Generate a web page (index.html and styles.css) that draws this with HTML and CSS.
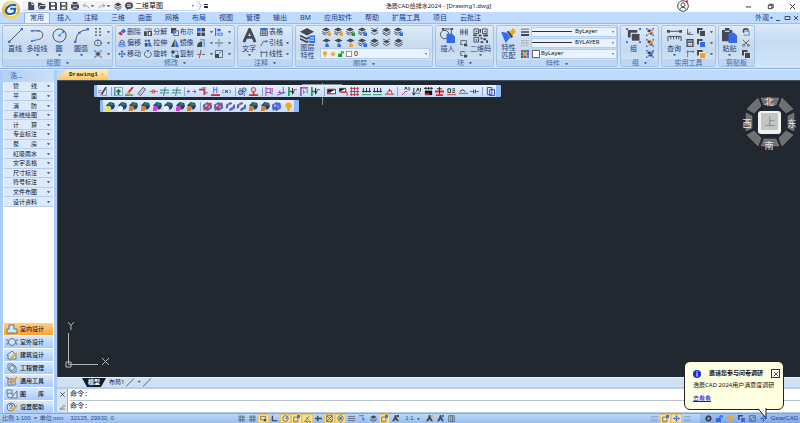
FILE: index.html
```html
<!DOCTYPE html>
<html lang="zh-CN">
<head>
<meta charset="utf-8">
<title>浩辰CAD给排水2024 - [Drawing1.dwg]</title>
<link rel="stylesheet" href="styles.css">
</head>
<body>
<svg class="defs" aria-hidden="true">
  <symbol id="file" viewBox="0 0 10 10"><path class="d" d="M1.500 0h5l2.500 2.500V10H1.500z"/><path class="ws" d="M6 0v3h3"/></symbol>
  <symbol id="open" viewBox="0 0 10 10"><path class="d" d="M0 1h4l1 1.500h4V4H2.500L0 8zM3 5h7L8 9H.5z"/></symbol>
  <symbol id="save" viewBox="0 0 10 10"><path class="d" d="M0 0h8.500L10 1.500V10H0z"/><path class="w" d="M2.500 1h5v3h-5zM2.500 6h5v3h-5z"/></symbol>
  <symbol id="saveas" viewBox="0 0 10 10"><path class="d" d="M0 0h9v10H0z"/><path class="w" d="M2 1h5v3H2zM2 6h5v3H2z"/><path class="os" d="M4 9l6-6"/></symbol>
  <symbol id="print" viewBox="0 0 10 10"><path class="d" d="M2 0h6v2.500H2zM0 3h10v5H0z"/><path class="w" d="M2.500 6h5v1h-5z"/><path class="d" d="M2 8h6v2H2z"/></symbol>
  <symbol id="undo" viewBox="0 0 10 10"><path class="gs" d="M9 8C8 5 5 4 2 4.500M4 2L1.500 4.500 4 7"/></symbol>
  <symbol id="redo" viewBox="0 0 10 10"><path class="gs" d="M1 8c1-3 4-4 7-3.500M6 2l2.500 2.500L6 7"/></symbol>
  <symbol id="chat" viewBox="0 0 10 10"><ellipse class="d" cx="5" cy="4.500" rx="5" ry="4.200"/><path class="d" d="M2 7v3l3-2"/><path class="ws" d="M2.500 3.500h5M2.500 5.500h5"/></symbol>
  <symbol id="layers" viewBox="0 0 10 10"><path class="d" d="M5 .5L9.500 3 5 5.500.5 3z"/><path class="ds" d="M.5 5L5 7.500 9.500 5M.5 7L5 9.500 9.500 7"/></symbol>
  <symbol id="lay" viewBox="0 0 10 10"><path class="d" d="M4.500 .5L9 2.700 4.500 5 0 2.700z"/><path class="ds" d="M.3 5l4 2 4-2M.3 7l4 2"/><path class="c" d="M6 6h4v4H6z"/></symbol>
  <symbol id="lay2" viewBox="0 0 10 10"><path class="d" d="M5 .5L9.500 2.700 5 5 .5 2.700z"/><path class="c" d="M3.500 10l.5-3 1.500-1.500L7 7l1 3z"/></symbol>
  <symbol id="layb" viewBox="0 0 10 10"><path class="bs" d="M1 1l4 2 4-2"/><path class="d" d="M1 4l4-1.500L9 4 5 6z"/><path class="ds" d="M1 6l4 2.500L9 6"/></symbol>
  <symbol id="laybig" viewBox="0 0 16 16"><path class="d" d="M7.500 0L15 4 7.500 8 0 4z"/><path class="ds2" d="M0 8l7 3.500L10 10M0 11.500L7 15l2-1"/><path class="b" d="M10 8h6v8h-6z"/><path class="ws" d="M11 10.500h4M11 13h4"/></symbol>
  <symbol id="line" viewBox="0 0 16 16"><path class="ds" d="M2 14L14 2"/><path class="b" d="M0 13.500h2.500V16H0zM13.500 0H16v2.500h-2.500z"/></symbol>
  <symbol id="pline" viewBox="0 0 16 16"><path class="ds" d="M2 3h7c6 0 6 8 1 9"/><path class="b" d="M1 2h2v2H1zM8 2h2v2H8zM1 13h2v2H1z"/><path class="bs" d="M2 14l8-2"/></symbol>
  <symbol id="circle" viewBox="0 0 16 16"><circle class="ds" cx="8" cy="8" r="7"/><path class="bs" d="M8 8l4-4"/><path class="b" d="M7 7h2v2H7zM11 3h2v2h-2z"/></symbol>
  <symbol id="arc" viewBox="0 0 16 16"><path class="ds" d="M2 14C2 7 7 2 14 2"/><path class="b" d="M0 13.500h2.500V16H0zM4.500 4H7v2.500H4.500zM13.500 0H16v2.500h-2.500z"/></symbol>
  <symbol id="pts" viewBox="0 0 10 10"><path class="d" d="M1.500 0h2v2h-2zM6.500 0h2v2h-2zM1.500 4h2v2h-2zM6.500 4h2v2h-2zM1.500 8h2v2h-2zM6.500 8h2v2h-2z"/></symbol>
  <symbol id="ell" viewBox="0 0 10 10"><ellipse class="ds" cx="5" cy="5" rx="4.500" ry="3.500"/><path class="b" d="M4 .5h2v2H4zM8 4h2v2H8zM4 4.500h1.500V6H4z"/></symbol>
  <symbol id="hatch" viewBox="0 0 10 10"><path class="g" d="M1.500 1.500h7v7h-7z"/><path class="bs" d="M0 1.500h2M1.500 0v2M8.500 0v1.500H10M0 8.500h2V10M10 8.500H8.500V10"/><path class="d" d="M3 3h4v4H3z"/></symbol>
  <symbol id="erase" viewBox="0 0 10 10"><path class="b" d="M3.500 4L7 .5 10 4 6.500 7z"/><path class="r" d="M3 4.500L6 7.500 4 9.500 0 7z"/></symbol>
  <symbol id="offset" viewBox="0 0 10 10"><path class="bs" d="M1 9h8V7H1z"/><path class="ds" d="M1 5h2V3c0-2 4-2 4 0v2h2M3 5h4"/></symbol>
  <symbol id="move" viewBox="0 0 10 10"><path class="b" d="M5 0l2 2.500H5.600v1.900h1.900V3L10 5 7.500 7V5.600H5.600v1.900H7L5 10 3 7.500h1.400V5.600H2.500V7L0 5l2.500-2v1.400h1.900V2.500H3z"/></symbol>
  <symbol id="explode" viewBox="0 0 10 10"><path class="g" d="M1 0h9v2.500H1z"/><path class="d" d="M0 4h3.500v6H0zM4.500 3.500H10V10H4.500z"/><path class="w" d="M6 5h2v4H6z"/></symbol>
  <symbol id="stretch" viewBox="0 0 10 10"><path class="b" d="M1 1h2.500v2.500H1zM5.500 4h2L10 9.500H5.500z"/><path class="d" d="M1 5h3.500v4.500H1zM4.500 1h3v2h-3z"/></symbol>
  <symbol id="rotate" viewBox="0 0 10 10"><path class="ds" d="M3 1.500a4.200 4.200 0 1 0 5 1"/><path class="b" d="M3 0h4L5 3z"/></symbol>
  <symbol id="bool" viewBox="0 0 10 10"><path class="d" d="M0 0h6.500v6.500H0z"/><path class="w" d="M3 3h4v4H3z"/><path class="ds" d="M3.500 3.500h6v6h-6z"/><path class="b" d="M4 4h2.500v2.500H4z"/></symbol>
  <symbol id="mirror" viewBox="0 0 10 10"><path class="d" d="M4.500 0v10H0z"/><path class="b" d="M5.500 0v10H10z"/></symbol>
  <symbol id="copy" viewBox="0 0 10 10"><circle class="d" cx="2.500" cy="2.500" r="2.300"/><path class="bs" d="M5 1.500h3.500V5M1.500 5.500v3h3"/><path class="d" d="M5.500 6H10v4H5.500z"/></symbol>
  <symbol id="array" viewBox="0 0 10 10"><path class="d" d="M0 5.500h4.500V10H0zM5.500 5.500H10V10H5.500zM5.500 0H10v4.500H5.500z"/><path class="b" d="M0 0h4.500v4.500H0z"/></symbol>
  <symbol id="fillet" viewBox="0 0 10 10"><path class="d" d="M0 10C0 5 3 3 6.500 3v7z"/><path class="bs" d="M4 1h5v9"/></symbol>
  <symbol id="trim" viewBox="0 0 10 10"><path class="ds" d="M5 0L3 10M6 5.500h4"/><path class="rs" d="M0 5.500h5"/></symbol>
  <symbol id="align" viewBox="0 0 10 10"><path class="b" d="M0 0h1.500v10H0zM3 1h4v3H3z"/><path class="bs" d="M3.500 6.500h6v2.500h-6z"/></symbol>
  <symbol id="brk" viewBox="0 0 10 10"><path class="bs" d="M5 0v3.500M5 6.500V10"/><path class="ds" d="M0 5h10"/></symbol>
  <symbol id="scale" viewBox="0 0 10 10"><path class="ds" d="M.5.5h9v9h-9z"/><path class="d" d="M0 5h5v5H0z"/><path class="bs" d="M5 4.500l3-2.500"/></symbol>
  <symbol id="txt" viewBox="0 0 16 16"><path class="ds3" d="M2 15L8 1.500 14 15M4.500 10h7"/></symbol>
  <symbol id="table" viewBox="0 0 10 10"><path class="b" d="M.5 0h9v2.500h-9z"/><path class="ds" d="M.5 3.500h9v6h-9zM1 6.500h8M3.500 3.500v6M6.500 3.500v6"/></symbol>
  <symbol id="lead" viewBox="0 0 10 10"><path class="ds" d="M1 9l3-6h3"/><circle class="b" cx="8" cy="3" r="1.500"/></symbol>
  <symbol id="dim" viewBox="0 0 10 10"><path class="ds" d="M1.500 1v8M8.500 1v8M1 3h8"/></symbol>
  <symbol id="insert" viewBox="0 0 16 16"><circle class="ds" cx="5" cy="7" r="4.500"/><path class="ds" d="M3 1h9v6"/><path class="b" d="M7 6h6l3 3v7H7z"/><path class="d" d="M2 0h2v2H2zM12 0h2v2h-2z"/></symbol>
  <symbol id="qr" viewBox="0 0 16 16"><path class="ds" d="M1 1h5v5H1zM10 1h5v5h-5zM1 10h5v5H1z"/><path class="d" d="M3 3h1.500v1.500H3zM12 3h1.500v1.500H12zM3 12h1.500v1.500H3zM7 1h1.500v4H7zM0 7h4v1.500H0zM6 7h3v2H6zM11 7h5v2h-5zM8 10h2v2H8zM11 11h3v2h-3zM8 14h3v2H8zM14 13h2v3h-2z"/></symbol>
  <symbol id="blk1" viewBox="0 0 10 10"><path class="ds" d="M1 1v8M3.500 1v8M7 1v8M9 1v8M1 5h8"/><circle class="b" cx="2" cy="5" r="1"/></symbol>
  <symbol id="blk2" viewBox="0 0 10 10"><path class="ds" d="M1 7V2h7v3M1 7h3"/><path class="d" d="M5 5.500h4V9H5z"/></symbol>
  <symbol id="blk3" viewBox="0 0 10 10"><path class="ds" d="M1 7V2h5M1 7h3"/><path class="d" d="M5 6h4v3.500H5z"/><path class="os" d="M5 5l4-4"/></symbol>
  <symbol id="match" viewBox="0 0 16 16"><path class="o" d="M9 4l4-4 3 4-4 4z"/><path class="b" d="M0 4l6 1 4 5-5 6z"/><path class="d" d="M8 3l5 6-2 2-5-7z"/></symbol>
  <symbol id="lw" viewBox="0 0 10 10"><path class="d" d="M0 1h10v1H0zM0 4h10v2H0zM0 7.500h10V10H0z"/></symbol>
  <symbol id="lt" viewBox="0 0 10 10"><path class="gs" d="M0 2h10" stroke-dasharray="2 1"/><path class="gs" d="M0 5h10" stroke-dasharray="4 1"/><path class="gs" d="M0 8h10" stroke-dasharray="1 1"/></symbol>
  <symbol id="pal" viewBox="0 0 10 10"><path fill="#e8322c" d="M0 0h3v3H0zM3.500 7H6.500v3H3.500z"/><path fill="#1f9a3a" d="M3.500 0h3v3h-3zM0 3.500h3v3H0z"/><path fill="#2d58e8" d="M7 0h3v3H7zM0 7h3v3H0z"/><path fill="#e8b020" d="M3.500 3.500h3v3h-3z"/><path fill="#b03ad0" d="M7 3.500h3v3H7z"/><path fill="#20a0d0" d="M7 7h3v3H7z"/></symbol>
  <symbol id="group" viewBox="0 0 16 16"><path class="d" d="M2 2h10v8H2z"/><path class="w" d="M5 5h10v9H5z"/><path class="d" d="M6 6h8.500v7.500H6z"/><path class="b" d="M0 0h2v2H0zM14 0h2v2h-2zM0 14h2v2H0zM14 14h2v2h-2z"/></symbol>
  <symbol id="grp" viewBox="0 0 10 10"><path class="d" d="M2 2h4v3H2zM5 5h3v3H5z"/><path class="b" d="M0 0h2v2H0zM8 0h2v2H8zM0 8h2v2H0zM8 8h2v2H8z"/><path class="cs" d="M3 8l6-6"/></symbol>
  <symbol id="query" viewBox="0 0 16 16"><path class="ds" d="M2 3.500h12M1 14V9h14v5M4 9v3M7 9v3M10 9v3M12.500 9v3"/><path class="d" d="M0 2h3v3H0zM13 2h3v3h-3z"/></symbol>
  <symbol id="ucs" viewBox="0 0 10 10"><path class="ds" d="M2 1v7h7M2 8l4-3"/></symbol>
  <symbol id="calc" viewBox="0 0 10 10"><path class="d" d="M.5 0h9v10h-9z"/><path class="ws" d="M2 2.500h6M2 5.500h6M2 7.500h6M4 5v4M6.500 5v4"/></symbol>
  <symbol id="cor" viewBox="0 0 10 10"><path class="bs" d="M2 9V2h7"/><path class="b" d="M1 1h2v2H1zM8 1h2v2H8z"/></symbol>
  <symbol id="two" viewBox="0 0 10 10"><path class="d" d="M0 0h7v7H0z"/><path class="w" d="M2.500 2.500H10V10H2.500z"/><path class="c" d="M3.500 3.500H10V10H3.500z"/></symbol>
  <symbol id="paste" viewBox="0 0 16 16"><path class="d" d="M0 2h3V0h5v2h3v12H0z"/><path class="w" d="M3 3h5v1H3z"/><path class="b" d="M7 5h6l3 3v8H7z"/></symbol>
  <symbol id="clip" viewBox="0 0 10 10"><path class="ds2" d="M2 6V3c0-2.500 5.500-2.500 5.500 0"/><path class="bs" d="M4 4h5v5H2"/></symbol>
  <symbol id="cut" viewBox="0 0 10 10"><path class="ds" d="M1 1l6 6M9 1L3 7"/><circle class="ds" cx="2" cy="8" r="1.300"/><circle class="ds" cx="8" cy="8" r="1.300"/></symbol>
  <symbol id="bulb" viewBox="0 0 10 10"><circle class="o" cx="5" cy="4" r="3.500"/><path class="o" d="M3.700 7h2.600v3H3.700z"/></symbol>
  <symbol id="sun" viewBox="0 0 10 10"><circle class="o" cx="5" cy="5" r="2.500"/><path class="os" d="M5 0v10M0 5h10M1.500 1.500l7 7M8.500 1.500l-7 7"/></symbol>
  <symbol id="lock" viewBox="0 0 10 10"><path class="c" d="M0 4.500h7V10H0z"/><path class="cs" d="M5.500 5V2.500C5.500.5 9 .5 9 2.500V4"/></symbol>
  <symbol id="sq" viewBox="0 0 10 10"><path fill="#fff" stroke="#333" d="M.5.5h9v9h-9z"/></symbol>
  <symbol id="user" viewBox="0 0 12 12"><circle class="ds" cx="6" cy="6" r="5.300"/><circle class="ds" cx="6" cy="4.800" r="2"/><path class="ds" d="M2.500 10c1-3.500 6-3.500 7 0"/><circle class="r" cx="10" cy="1.500" r="1.300"/></symbol>

  <symbol id="t-pen" viewBox="0 0 10 10"><path class="gs" d="M0 4h4M0 6h3M9.500 2v7.500H4"/><path class="ds2" d="M4 8l5-8"/><path class="rs" d="M2 9l2-1"/></symbol>
  <symbol id="t-tree" viewBox="0 0 10 10"><path fill="#dfe8f4" stroke="#7f9cc8" d="M.5.5h9v9h-9z"/><path fill="#0a8a30" d="M5 2l3 3-2 1v3H4V6L2 5z"/><path class="bs" d="M1 0v10"/></symbol>
  <symbol id="t-brush" viewBox="0 0 10 10"><path fill="none" stroke="#2a9a40" stroke-width="1.500" d="M0 9h9"/><path class="rs2" d="M4 6l5-6"/><path class="os2" d="M2 6l3 2"/></symbol>
  <symbol id="t-rub" viewBox="0 0 10 10"><path fill="#c8ccd8" stroke="#556" d="M1 7.500L6.500.5l3 2L4 9.500z"/></symbol>
  <symbol id="t-node" viewBox="0 0 10 10"><path class="gs" d="M0 5h10"/><circle fill="none" stroke="#d42020" cx="5" cy="5" r="1.800"/></symbol>
  <symbol id="t-cross" viewBox="0 0 10 10"><path fill="none" stroke="#2a7a6a" d="M0 3.500h10M0 6.500h4M6 6.500h4M4 10l2-10"/></symbol>
  <symbol id="t-dbl" viewBox="0 0 10 10"><path fill="none" stroke="#a030c0" d="M0 5h10M2 3L0 5l2 2M8 3l2 2-2 2"/><path class="w" d="M4 4h2v2H4z"/></symbol>
  <symbol id="t-tap" viewBox="0 0 10 10"><path class="rs2" d="M0 3h6v6"/><path class="bs" d="M3 1h5M6 6.500h4"/></symbol>
  <symbol id="t-mag" viewBox="0 0 10 10"><path fill="none" stroke="#a020c0" stroke-width="1.500" d="M1 0v10M1 1h8"/><path fill="none" stroke="#1a9a60" d="M4 3v4l2-2M8 2v5"/></symbol>
  <symbol id="t-riser" viewBox="0 0 10 10"><path class="bs" d="M3 0v7M6.500 0v7M3 3h3.500"/><path class="rs2" d="M0 9h10"/></symbol>
  <symbol id="t-valve" viewBox="0 0 10 10"><path fill="none" stroke="#1d7a4a" d="M2 3L0 5l2 2M8 3l2 2-2 2M4 3.500v3l2-3v3z"/></symbol>
  <symbol id="t-pump" viewBox="0 0 10 10"><circle fill="#9aa6c8" stroke="#334a80" cx="3" cy="6" r="2.500"/><circle fill="#c2cade" stroke="#334a80" cx="7" cy="3" r="2"/><path class="bs" d="M1 2h3M7 6v4"/></symbol>
  <symbol id="t-stamp" viewBox="0 0 10 10"><circle fill="#e0c4cc" stroke="#a34a5a" cx="5" cy="3" r="2.500"/><path class="rs2" d="M5 5v3M0 9h10"/></symbol>
  <symbol id="t-pipe" viewBox="0 0 10 10"><path fill="none" stroke="#a030c0" d="M1 0v10M1 2h6M1 6h3"/><path class="bs" d="M6 2v5l3 1"/><path class="rs" d="M8 1v5M4 6h3"/></symbol>
  <symbol id="t-turn" viewBox="0 0 10 10"><path class="bs" d="M0 9l9-3M7 0v7M4 7l5-1"/><path class="rs" d="M1 6h4M3 4v3"/></symbol>
  <symbol id="t-green" viewBox="0 0 10 10"><path fill="none" stroke="#128a30" stroke-width="1.600" d="M1 0v10M1 5h5"/><path class="ks" d="M5 1v7l2-4"/><path class="rs" d="M6 3h4"/></symbol>
  <symbol id="t-box" viewBox="0 0 10 10"><path fill="#fff" stroke="#333" d="M.5 2.500h9v5h-9z"/><path class="k" d="M1 3h8L1 7z"/><path class="r" d="M1 5h3v2H1z"/></symbol>
  <symbol id="t-boxr" viewBox="0 0 10 10"><path fill="#fff" stroke="#333" d="M.5 1.500h7v4h-7z"/><path class="k" d="M1 2h6L1 5z"/><path class="rs" d="M2 6h7v4"/></symbol>
  <symbol id="t-grid" viewBox="0 0 10 10"><path fill="none" stroke="#d42020" d="M0 1.500h10M0 5h10M0 8.500h10"/><path fill="none" stroke="#7a4a5a" d="M1.500 0v10M5 0v10M8.500 0v10"/></symbol>
  <symbol id="t-comb" viewBox="0 0 10 10"><path class="ks" d="M0 5h10M1.500 1v5M5 1v5M8.500 1v5"/><path fill="none" stroke="#1a9a40" d="M0 8.500h10"/></symbol>
  <symbol id="t-red" viewBox="0 0 10 10"><path class="rs" d="M0 8h10M2 8l2-4h3l1 4"/><path class="ds" d="M5 2v3"/></symbol>
  <symbol id="t-a1" viewBox="0 0 10 10"><path class="rs" d="M1 9l4-4h2"/><path class="ks" d="M4 3l1.500-3L7 3M9 0v4"/></symbol>
  <symbol id="t-a2" viewBox="0 0 10 10"><path class="ks" d="M2 1v8M0 6l2 3 2-3M5 5l1.500-4L8 5M9.500 1v4"/><path class="rs" d="M5 7h4"/></symbol>
  <symbol id="t-slab" viewBox="0 0 10 10"><path class="ks" d="M0 1.500h10M2 0v3M5 0v3M8 0v3"/><path class="k" d="M1 4h8v5H1z"/><path class="r" d="M1 7h5v2H1z"/></symbol>
  <symbol id="t-stack" viewBox="0 0 10 10"><path class="rs2" d="M0 5h10M1 9h8"/><path class="ks" d="M2 2h6M5 0v8"/></symbol>
  <symbol id="t-num" viewBox="0 0 10 10"><path class="ks" d="M1 2h3v4H1zM6 2h3M6 4h3M6 6h3"/><path class="rs" d="M0 8.500h10"/></symbol>
  <symbol id="t-wave" viewBox="0 0 10 10"><path class="ks" d="M1 5l3-2 3 2"/><path class="rs" d="M0 7h10"/></symbol>
  <symbol id="t-dot" viewBox="0 0 10 10"><path class="rs" d="M0 5h3M7 5h3"/><path class="ks" d="M4 3v4M6 3v4"/></symbol>
  <symbol id="t-clip" viewBox="0 0 10 10"><path fill="#dfe8ff" stroke="#2c3fa8" d="M1.500.5h5v8h-5zM4 3h5.500v6.500H4z"/></symbol>
  <symbol id="t-cube" viewBox="0 0 10 10"><path fill="#223c90" d="M0 4l4-4 5 1 1 4-5 3z"/><path fill="#1d8a35" d="M3 1h4l2 3H4z"/><path class="c" d="M0 6l3-2 3 2-2 4H0z"/><path fill="#334" d="M6 6l3-2v3L6 9z"/></symbol>
  <symbol id="t-lamp" viewBox="0 0 10 10"><path fill="#5a64b8" d="M0 3l5-3 5 3v4l-5 3-5-3z"/><path fill="#c4cef4" d="M2.500 3h5v3h-5z"/><path class="cs" d="M1 9l8-8"/></symbol>

  <symbol id="s-grid" viewBox="0 0 10 10"><path class="ds" d="M3 0v10M7 0v10M0 3h10M0 7h10"/></symbol>
  <symbol id="s-l" viewBox="0 0 10 10"><path class="ds2" d="M2 1v7h7"/></symbol>
  <symbol id="s-pol" viewBox="0 0 10 10"><circle class="ds" cx="5" cy="5" r="4"/><path class="bs" d="M5 5l4-4M5 5h4"/></symbol>
  <symbol id="s-snap" viewBox="0 0 10 10"><path class="ds" d="M1 3h6v6H1z"/><path class="b" d="M6 0h4v4H6z"/></symbol>
  <symbol id="s-ang" viewBox="0 0 10 10"><path class="ds" d="M1 9l7-8M1 9h9M3 3l4 4"/></symbol>
  <symbol id="s-plus" viewBox="0 0 10 10"><path class="ds2" d="M4 1v8M0 5h10"/></symbol>
  <symbol id="s-x" viewBox="0 0 10 10"><path class="ds" d="M1 1h8v8H1zM1 1l8 8M9 1L1 9"/></symbol>
  <symbol id="s-tgt" viewBox="0 0 10 10"><circle class="ds" cx="5" cy="5" r="4"/><circle class="b" cx="5" cy="5" r="2"/></symbol>
  <symbol id="s-bars" viewBox="0 0 10 10"><path class="ds" d="M0 2h10M0 5h10M0 8h10"/></symbol>
  <symbol id="s-lines" viewBox="0 0 10 10"><path class="gs" d="M0 2.500h10M0 7.500h10"/></symbol>
  <symbol id="s-cur" viewBox="0 0 10 10"><path class="ds" d="M0 1h7"/><path class="b" d="M4 2l5 5H6v3z"/></symbol>
  <symbol id="s-man" viewBox="0 0 10 10"><path class="d" d="M4 0h2l1 4 3 5H7L5 6 3 9H0l3-5z"/><path class="c" d="M7 0h3v3H7z"/></symbol>
  <symbol id="s-col" viewBox="0 0 10 10"><path class="ds" d="M1 1h8v9H1zM4 1v9M6.500 1v9"/></symbol>
  <symbol id="s-gear" viewBox="0 0 10 10"><circle fill="none" stroke="#3a4250" stroke-width="2.400" cx="5" cy="5" r="3"/><path class="ds" d="M5 0v2M5 8v2M0 5h2M8 5h2M1.500 1.500l1.500 1.500M7 7l1.500 1.500M8.500 1.500L7 3M3 7L1.500 8.500"/></symbol>
  <symbol id="s-max" viewBox="0 0 10 10"><path class="ds" d="M1 1h8v8H1zM5 3h2v2M3 5v2h2"/></symbol>

  <symbol id="m-in" viewBox="0 0 12 10"><path class="m" d="M1 9V5h2V1h5v4h3v4z"/></symbol>
  <symbol id="m-out" viewBox="0 0 12 10"><circle class="m" cx="6" cy="5" r="3.500"/><path class="m" d="M0 3h2v4H0M12 3h-2v4h2"/></symbol>
  <symbol id="m-arch" viewBox="0 0 12 10"><path class="m" d="M1 5l5-4 4 4v4H2V5z"/><path class="os2" d="M5 8l6-5"/></symbol>
  <symbol id="m-proj" viewBox="0 0 12 10"><path class="m" d="M2 1h5l3 3v5H5L2 6z"/><circle class="m" cx="6" cy="5" r="2.500"/></symbol>
  <symbol id="m-tool" viewBox="0 0 12 10"><path class="m" d="M2 3h7v6H2zM4 5h3v2H4z"/><path class="os2" d="M5 7l6-6"/><path class="rs" d="M0 1l3 2"/></symbol>
  <symbol id="m-lib" viewBox="0 0 12 10"><path class="m" d="M1 1h5v4H1zM5 9l6-7v7z"/><circle class="m" cx="4" cy="6.500" r="2.500"/></symbol>
  <symbol id="m-help" viewBox="0 0 12 10"><circle class="m" cx="5" cy="5" r="4"/><path class="ds" d="M3.500 4c0-2 3-2 3 0L5 5.500V7"/><path class="os2" d="M6 9l5-6"/></symbol>
</svg>

<div class="app">
  <header class="titlebar">
    <div class="quick">
      <button aria-label="新建"><svg><use href="#file"/></svg></button>
      <button aria-label="打开"><svg><use href="#open"/></svg></button>
      <button aria-label="保存"><svg><use href="#save"/></svg></button>
      <button aria-label="另存为"><svg><use href="#saveas"/></svg></button>
      <button aria-label="打印"><svg><use href="#print"/></svg></button>
      <button aria-label="放弃" class="more"><svg><use href="#undo"/></svg><i class="arr"></i></button>
      <button aria-label="重做" class="more"><svg><use href="#redo"/></svg><i class="arr"></i></button>
      <button aria-label="图层"><svg><use href="#layers"/></svg></button>
      <button aria-label="反馈"><svg><use href="#chat"/></svg></button>
      <span class="pick"><select aria-label="工作空间"><option>二维草图</option></select></span>
    </div>
    <button class="qmore" aria-label="自定义快速访问"></button>
    <h1>浩辰CAD给排水2024 - [Drawing1.dwg]</h1>
    <div class="wintools">
      <button aria-label="用户" class="user"><svg viewBox="0 0 12 12"><use href="#user"/></svg></button>
      <button aria-label="最小化"><svg viewBox="0 0 8 8"><path class="ks" d="M1 4.500h6"/></svg></button>
      <button aria-label="还原"><svg viewBox="0 0 8 8"><path class="ks" d="M1.500 2.500h4v4h-4zM3 2.500v-1h4v4H5.500"/></svg></button>
      <button aria-label="关闭"><svg viewBox="0 0 8 8"><path class="ks" d="M1 1l6 6M7 1L1 7"/></svg></button>
    </div>
  </header>
  <button class="logo" aria-label="应用程序菜单"><svg viewBox="0 0 24 24">
    <defs><linearGradient id="lg" x1="0" y1="0" x2="0" y2="1"><stop offset="0" stop-color="#f9e58a"/><stop offset=".5" stop-color="#efb820"/><stop offset="1" stop-color="#f7dc50"/></linearGradient></defs>
    <circle cx="12" cy="12" r="11.500" fill="#c6d3e6"/><circle cx="12" cy="12" r="10.500" fill="url(#lg)"/><circle cx="12" cy="12" r="7.500" fill="#fffbe8"/>
    <path d="M18 6.500c-6-1.500-11 1-12 5.500-.6 4 3 5.500 7 4.500l3-1 1-5h-6" fill="none" stroke="#1b5fb4" stroke-width="2.600"/></svg></button>
  <nav class="tabs">
    <a class="on" href="#">常用</a><a href="#">插入</a><a href="#">注释</a><a href="#">三维</a><a href="#">曲面</a><a href="#">网格</a><a href="#">布局</a><a href="#">视图</a><a href="#">管理</a><a href="#">输出</a><a href="#">BM</a><a href="#">应用软件</a><a href="#">帮助</a><a href="#">扩展工具</a><a href="#">项目</a><a href="#">云批注</a>
    <div class="docwin">
      <button class="look">外观<i class="arr"></i></button>
      <button aria-label="最小化图纸"><svg viewBox="0 0 8 8"><path class="ds" d="M2 6.500h4"/></svg></button>
      <button aria-label="还原图纸"><svg viewBox="0 0 8 8"><path class="ds" d="M2 2.500h5v3H2z"/></svg></button>
      <button aria-label="关闭图纸"><svg viewBox="0 0 8 8"><path class="ds" d="M2 2l4 4M6 2L2 6"/></svg></button>
    </div>
  </nav>

  <div class="ribbon">
    <section class="panel p-draw">
      <div class="body">
        <button class="big"><svg><use href="#line"/></svg>直线</button>
        <button class="big"><svg><use href="#pline"/></svg>多段线<i class="arr"></i></button>
        <button class="big"><svg><use href="#circle"/></svg>圆<i class="arr"></i></button>
        <button class="big"><svg><use href="#arc"/></svg>圆弧<i class="arr"></i></button>
        <div class="stack">
          <button class="sm" aria-label="点"><svg><use href="#pts"/></svg><i class="arr"></i></button>
          <button class="sm" aria-label="椭圆"><svg><use href="#ell"/></svg><i class="arr"></i></button>
          <button class="sm" aria-label="填充"><svg><use href="#hatch"/></svg><i class="arr"></i></button>
        </div>
      </div>
      <h2>绘图<i class="arr"></i></h2>
    </section>
    <section class="panel p-mod">
      <div class="body">
        <div class="stack wide">
          <button class="sm"><svg><use href="#erase"/></svg>删除</button>
          <button class="sm"><svg><use href="#offset"/></svg>偏移</button>
          <button class="sm"><svg><use href="#move"/></svg>移动</button>
        </div>
        <div class="stack wide">
          <button class="sm"><svg><use href="#explode"/></svg>分解</button>
          <button class="sm"><svg><use href="#stretch"/></svg>拉伸</button>
          <button class="sm"><svg><use href="#rotate"/></svg>旋转</button>
        </div>
        <div class="stack wide">
          <button class="sm"><svg><use href="#bool"/></svg>布尔</button>
          <button class="sm"><svg><use href="#mirror"/></svg>镜像</button>
          <button class="sm"><svg><use href="#copy"/></svg>复制</button>
        </div>
        <div class="stack">
          <button class="sm" aria-label="阵列"><svg><use href="#array"/></svg><i class="arr"></i></button>
          <button class="sm" aria-label="圆角"><svg><use href="#fillet"/></svg><i class="arr"></i></button>
          <button class="sm" aria-label="修剪"><svg><use href="#trim"/></svg><i class="arr"></i></button>
        </div>
        <div class="stack">
          <button class="sm" aria-label="对齐"><svg><use href="#align"/></svg><i class="arr"></i></button>
          <button class="sm" aria-label="打断"><svg><use href="#brk"/></svg><i class="arr"></i></button>
          <button class="sm" aria-label="缩放"><svg><use href="#scale"/></svg><i class="arr"></i></button>
        </div>
      </div>
      <h2>修改<i class="arr"></i></h2>
    </section>
    <section class="panel p-ann">
      <div class="body">
        <button class="big"><svg><use href="#txt"/></svg>文字<i class="arr"></i></button>
        <div class="stack">
          <button class="sm"><svg><use href="#table"/></svg>表格</button>
          <button class="sm"><svg><use href="#lead"/></svg>引线<i class="arr"></i></button>
          <button class="sm"><svg><use href="#dim"/></svg>线性<i class="arr"></i></button>
        </div>
      </div>
      <h2>注释<i class="arr"></i></h2>
    </section>
    <section class="panel p-lay">
      <div class="body">
        <button class="big two"><svg><use href="#laybig"/></svg>图层<br>特性</button>
        <div class="laybox">
          <div class="laygrid">
            <button aria-label="关闭图层" class="c-o"><svg><use href="#lay"/></svg></button>
            <button aria-label="冻结图层" class="c-o"><svg><use href="#lay"/></svg></button>
            <button aria-label="锁定图层" class="c-g"><svg><use href="#lay"/></svg></button>
            <button aria-label="图层匹配" class="c-b"><svg><use href="#lay"/></svg></button>
            <button aria-label="图层合并"><svg><use href="#layb"/></svg></button>
            <button aria-label="图层漫游"><svg><use href="#layers"/></svg></button>
            <button aria-label="图层状态" class="c-b"><svg><use href="#lay"/></svg></button>
            <button aria-label="打开所有图层" class="c-b"><svg><use href="#lay2"/></svg></button>
            <button aria-label="解冻所有图层" class="c-b"><svg><use href="#lay2"/></svg></button>
            <button aria-label="解锁图层" class="c-o"><svg><use href="#lay2"/></svg></button>
            <button aria-label="隔离图层" class="c-b"><svg><use href="#lay"/></svg></button>
            <button aria-label="取消隔离"><svg><use href="#layers"/></svg></button>
            <button aria-label="删除图层"><svg><use href="#layb"/></svg></button>
            <button aria-label="上一图层"><svg><use href="#layers"/></svg></button>
          </div>
          <div class="laycombo pick">
            <svg><use href="#bulb"/></svg><svg><use href="#sun"/></svg><svg class="c-g"><use href="#lock"/></svg><svg><use href="#sq"/></svg>
            <select aria-label="当前图层"><option>0</option></select>
          </div>
        </div>
      </div>
      <h2>图层<i class="arr"></i></h2>
    </section>
    <section class="panel p-blk">
      <div class="body">
        <button class="big"><svg><use href="#insert"/></svg>插入</button>
        <div class="stack">
          <button class="sm" aria-label="创建块"><svg><use href="#blk1"/></svg></button>
          <button class="sm" aria-label="编辑块"><svg><use href="#blk2"/></svg></button>
          <button class="sm" aria-label="编辑属性"><svg><use href="#blk3"/></svg></button>
        </div>
        <button class="big"><svg><use href="#qr"/></svg>二维码<i class="arr"></i></button>
      </div>
      <h2>块<i class="arr"></i></h2>
    </section>
    <section class="panel p-prop">
      <div class="body">
        <button class="big two"><svg><use href="#match"/></svg>特性<br>匹配</button>
        <div class="props">
          <div class="prop"><svg><use href="#lw"/></svg><span class="pick lined"><select aria-label="线宽"><option>ByLayer</option></select></span></div>
          <div class="prop"><svg><use href="#lt"/></svg><span class="pick lined"><select aria-label="线型"><option>BYLAYER</option></select></span></div>
          <div class="prop"><svg><use href="#pal"/></svg><span class="pick"><svg><use href="#sq"/></svg><select aria-label="颜色"><option>ByLayer</option></select></span></div>
        </div>
      </div>
      <h2>特性<i class="arr"></i></h2>
    </section>
    <section class="panel p-grp">
      <div class="body">
        <button class="big"><svg><use href="#group"/></svg>组</button>
        <div class="stack">
          <button class="sm c-o" aria-label="解除编组"><svg><use href="#grp"/></svg></button>
          <button class="sm c-o" aria-label="组编辑"><svg><use href="#grp"/></svg></button>
          <button class="sm c-b" aria-label="组选择"><svg><use href="#grp"/></svg></button>
        </div>
      </div>
      <h2>组<i class="arr"></i></h2>
    </section>
    <section class="panel p-util">
      <div class="body">
        <button class="big"><svg><use href="#query"/></svg>查询<i class="arr"></i></button>
        <div class="stack">
          <button class="sm" aria-label="坐标"><svg><use href="#ucs"/></svg></button>
          <button class="sm" aria-label="计算器"><svg><use href="#calc"/></svg></button>
          <button class="sm" aria-label="点坐标"><svg><use href="#cor"/></svg></button>
        </div>
        <div class="stack">
          <button class="sm c-d" aria-label="选择"><svg><use href="#two"/></svg><i class="arr"></i></button>
          <button class="sm c-b" aria-label="绘图次序"><svg><use href="#two"/></svg><i class="arr"></i></button>
          <button class="sm c-o" aria-label="快速选择"><svg><use href="#two"/></svg><i class="arr"></i></button>
        </div>
      </div>
      <h2>实用工具</h2>
    </section>
    <section class="panel p-clip">
      <div class="body">
        <button class="big"><svg><use href="#paste"/></svg>粘贴<i class="arr"></i></button>
        <div class="stack">
          <button class="sm" aria-label="复制剪裁"><svg><use href="#clip"/></svg></button>
          <button class="sm" aria-label="剪切"><svg><use href="#cut"/></svg></button>
          <button class="sm c-d" aria-label="复制"><svg><use href="#two"/></svg></button>
        </div>
      </div>
      <h2>剪贴板</h2>
    </section>
  </div>

  <main class="work">
    <aside class="side">
      <div class="sidehead">浩...</div>
      <div class="cats">
        <button><span>管<b></b>线</span><i class="arr"></i></button>
        <button><span>平<b></b>面</span><i class="arr"></i></button>
        <button><span>消<b></b>防</span><i class="arr"></i></button>
        <button><span>系统绘图</span><i class="arr"></i></button>
        <button><span>计<b></b>算</span><i class="arr"></i></button>
        <button><span>专业标注</span><i class="arr"></i></button>
        <button><span>泵<b></b>房</span><i class="arr"></i></button>
        <button><span>虹吸雨水</span><i class="arr"></i></button>
        <button><span>文字表格</span><i class="arr"></i></button>
        <button><span>尺寸标注</span><i class="arr"></i></button>
        <button><span>符号标注</span><i class="arr"></i></button>
        <button><span>文件布图</span><i class="arr"></i></button>
        <button><span>设计资料</span><i class="arr"></i></button>
      </div>
      <div class="mods">
        <button class="on"><svg><use href="#m-in"/></svg><span>室内设计</span></button>
        <button><svg><use href="#m-out"/></svg><span>室外设计</span></button>
        <button><svg><use href="#m-arch"/></svg><span>建筑设计</span></button>
        <button><svg><use href="#m-proj"/></svg><span>工程管理</span></button>
        <button><svg><use href="#m-tool"/></svg><span>通用工具</span></button>
        <button><svg><use href="#m-lib"/></svg><span>图<b></b>库</span></button>
        <button><svg><use href="#m-help"/></svg><span>设置帮助</span></button>
      </div>
    </aside>

    <div class="doc">
      <div class="doctabs"><a href="#" class="doctab"><span>Drawing1</span><i>×</i></a></div>
      <div class="canvas">
        <svg class="cross" viewBox="0 0 40 22"><path d="M0 1.500h40M20.500 0v22"/></svg>
        <div class="bar bar1">
          <button aria-label="绘管"><svg><use href="#t-pen"/></svg></button><hr>
          <button aria-label="布置"><svg><use href="#t-tree"/></svg></button>
          <button aria-label="刷新"><svg><use href="#t-brush"/></svg></button>
          <button aria-label="擦除"><svg><use href="#t-rub"/></svg></button>
          <button aria-label="节点"><svg><use href="#t-node"/></svg></button>
          <button aria-label="管线打断"><svg><use href="#t-cross"/></svg></button>
          <button aria-label="管线连接"><svg><use href="#t-cross"/></svg></button><hr>
          <button aria-label="管线延伸"><svg><use href="#t-dbl"/></svg></button>
          <button aria-label="龙头"><svg><use href="#t-tap"/></svg></button>
          <button aria-label="立管"><svg><use href="#t-riser"/></svg></button>
          <button aria-label="阀门"><svg><use href="#t-valve"/></svg></button><hr>
          <button aria-label="水泵"><svg><use href="#t-pump"/></svg></button>
          <button aria-label="消火栓"><svg><use href="#t-stamp"/></svg></button><hr>
          <button aria-label="给水管"><svg><use href="#t-pipe"/></svg></button>
          <button aria-label="排水管"><svg><use href="#t-turn"/></svg></button>
          <button aria-label="支管"><svg><use href="#t-green"/></svg></button>
          <button aria-label="喷淋管"><svg><use href="#t-mag"/></svg></button>
          <button aria-label="雨水管"><svg><use href="#t-green"/></svg></button><hr>
          <button aria-label="消防箱"><svg><use href="#t-box"/></svg></button>
          <button aria-label="接消防箱"><svg><use href="#t-boxr"/></svg></button>
          <button aria-label="矩形喷头"><svg><use href="#t-grid"/></svg></button>
          <button aria-label="直线喷头"><svg><use href="#t-comb"/></svg></button>
          <button aria-label="喷头尺寸"><svg><use href="#t-comb"/></svg></button>
          <button aria-label="喷头管径"><svg><use href="#t-red"/></svg></button><hr>
          <button aria-label="引出标注"><svg><use href="#t-a1"/></svg></button>
          <button aria-label="标高"><svg><use href="#t-a2"/></svg></button>
          <button aria-label="楼板"><svg><use href="#t-slab"/></svg></button>
          <button aria-label="管径标注"><svg><use href="#t-stack"/></svg></button>
          <button aria-label="编号"><svg><use href="#t-num"/></svg></button>
          <button aria-label="坡度"><svg><use href="#t-wave"/></svg></button>
          <button aria-label="断管"><svg><use href="#t-dot"/></svg></button><hr>
          <button aria-label="粘贴图块"><svg><use href="#t-clip"/></svg></button>
        </div>
        <div class="bar bar2">
          <button aria-label="显示一" class="c-y"><svg><use href="#t-cube"/></svg></button>
          <button aria-label="显示二" class="c-w"><svg><use href="#t-cube"/></svg></button>
          <button aria-label="显示三" class="c-br"><svg><use href="#t-cube"/></svg></button>
          <button aria-label="显示四" class="c-br"><svg><use href="#t-cube"/></svg></button>
          <button aria-label="显示五" class="c-m"><svg><use href="#t-cube"/></svg></button>
          <button aria-label="显示六" class="c-w"><svg><use href="#t-cube"/></svg></button>
          <button aria-label="显示七" class="c-m"><svg><use href="#t-cube"/></svg></button>
          <button aria-label="显示八" class="c-br"><svg><use href="#t-cube"/></svg></button><hr>
          <button aria-label="隐藏" class="c-r"><svg><use href="#t-lamp"/></svg></button>
          <button aria-label="冻结" class="c-r"><svg><use href="#t-lamp"/></svg></button>
          <button aria-label="恢复" class="c-w"><svg><use href="#t-lamp"/></svg></button>
          <button aria-label="合并" class="c-w"><svg><use href="#t-lamp"/></svg></button>
          <button aria-label="锁定" class="c-br"><svg><use href="#t-cube"/></svg></button>
          <button aria-label="解锁" class="c-br"><svg><use href="#t-cube"/></svg></button>
          <button aria-label="还原" class="c-b"><svg><use href="#t-lamp"/></svg></button>
          <button aria-label="开关"><svg><use href="#bulb"/></svg></button>
        </div>
        <svg class="viewcube" viewBox="0 0 60 60">
          <g fill="#6f7072" stroke="#8a8b8d" stroke-width=".5">
            <path d="M21 6h18l-3 7H24zM42 6l11 11-7 4-7-7zM54 21v18l-6-3V24zM53 43L42 54l-3-8 7-7zM39 54H21l3-7h12zM18 54L7 43l7-4 7 7zM6 39V21l6 3v12zM7 17L18 6l3 8-7 7z"/>
          </g>
          <rect x="18" y="19" width="23" height="23" rx="3" fill="#f0f2f0"/><rect x="21" y="21" width="17" height="17" fill="#c3c5c4"/>
          <text x="30" y="34" class="top">上</text>
          <text x="29" y="13">北</text><text x="52" y="35">东</text><text x="29" y="57">南</text><text x="7" y="35">西</text>
        </svg>
        <svg class="axes" viewBox="0 0 50 52"><path d="M5.500 15v31M5.500 46.500H35M3 44h5v5H3zM5 4l3 3.500L11 4M8 7.500V12M39 40l7 7M46 40l-7 7"/></svg>
      </div>
      <div class="sheets">
        <a href="#" class="on">模型</a><a href="#">布局1</a><a href="#">+</a>
      </div>
      <div class="cmd">
        <div class="cmdgrip">
          <button aria-label="关闭命令行"><svg viewBox="0 0 8 8"><path class="ds" d="M1.500 1.500l5 5M6.500 1.500l-5 5"/></svg></button>
          <button aria-label="命令行设置"><svg viewBox="0 0 8 8"><path class="gs" d="M1 7l5-5 1 1-4 4zM1 7h6"/></svg></button>
        </div>
        <div class="cmdlines">
          <p>命令:</p>
          <label><span>命令:</span><input type="text" aria-label="命令输入"></label>
        </div>
      </div>
    </div>
  </main>

  <footer class="status">
    <div class="coords"><span>比例 1:100<i class="arr"></i></span><span>单位:mm</span><span class="xyz">32135, 29930, 0</span></div>
    <div class="modes">
      <button aria-label="捕捉"><svg><use href="#s-grid"/></svg></button>
      <button aria-label="栅格"><svg><use href="#s-grid"/></svg></button>
      <button aria-label="动态输入" class="on"><svg><use href="#blk2"/></svg></button>
      <button aria-label="正交"><svg><use href="#s-l"/></svg></button>
      <button aria-label="极轴" class="on"><svg><use href="#s-pol"/></svg></button>
      <button aria-label="对象捕捉" class="on"><svg><use href="#s-snap"/></svg></button>
      <button aria-label="对象追踪" class="on"><svg><use href="#s-ang"/></svg></button>
      <button aria-label="动态坐标"><svg><use href="#s-plus"/></svg></button>
      <button aria-label="三维捕捉" class="on"><svg><use href="#s-x"/></svg></button>
      <button aria-label="动态观察" class="on"><svg><use href="#s-tgt"/></svg></button>
      <button aria-label="显示线宽"><svg><use href="#s-bars"/></svg></button>
      <button aria-label="选择循环"><svg><use href="#s-cur"/></svg></button>
      <button aria-label="图层透明"><svg><use href="#layers"/></svg></button>
      <button aria-label="快捷特性" class="on"><svg><use href="#s-snap"/></svg></button>
      <button aria-label="注释比例"><svg class="c-d"><use href="#s-man"/></svg></button>
      <button class="ratio">1:1<i class="arr"></i></button>
      <button aria-label="注释可见" class="c-o"><svg><use href="#s-man"/></svg></button>
      <button aria-label="自动添加比例" class="c-b"><svg><use href="#s-man"/></svg></button>
      <button aria-label="视口"><svg><use href="#s-col"/></svg></button>
    </div>
    <div class="modes right">
      <button aria-label="对齐线"><svg><use href="#s-lines"/></svg></button>
      <button aria-label="夹点" class="on"><svg><use href="#s-snap"/></svg></button>
      <button aria-label="平移" class="on"><svg><use href="#move"/></svg></button>
      <button aria-label="列表"><svg><use href="#s-lines"/></svg></button>
    </div>
    <div class="modes end">
      <button aria-label="设置"><svg><use href="#s-gear"/></svg></button>
      <button aria-label="锁定界面" class="c-b"><svg><use href="#lock"/></svg></button>
      <button aria-label="提示"><svg><use href="#bulb"/></svg></button>
      <button aria-label="隔离对象" class="c-b"><svg><use href="#two"/></svg></button>
      <button aria-label="全屏"><svg><use href="#s-max"/></svg></button>
      <button aria-label="登录"><svg><use href="#move"/></svg></button>
      <span>GstarCAD</span>
    </div>
  </footer>

  <div class="balloon" role="status">
    <svg class="tail" viewBox="0 0 10 11"><path d="M0 0h8v10z" fill="#ffffe1"/><path d="M0 .5L8 10V0" fill="none" stroke="#222"/></svg>
    <div class="bhead">
      <svg viewBox="0 0 8 8"><circle cx="4" cy="4" r="4" fill="#1a2ee0"/><path d="M3.500 1.300h1.200v1.200H3.500zM3.500 3.200h1.200v3.300H3.500z" fill="#fff"/></svg>
      <strong>邀请您参与问卷调研</strong>
      <button aria-label="关闭提示"><svg viewBox="0 0 8 8"><path class="ks" d="M1 1l6 6M7 1L1 7"/></svg></button>
    </div>
    <p>浩辰CAD 2024用户满意度调研</p>
    <a href="#">去看看</a>
  </div>
</div>
</body>
</html>
```
FILE: styles.css
```css
* { box-sizing: border-box; margin: 0; padding: 0; }
html, body { height: 100%; }
body { font: 7px/9px "Noto Sans", "Noto Sans CJK SC", sans-serif; color: #1f3c78; background: #bfdbff; overflow: hidden; }
button, select, input { font: inherit; color: inherit; background: none; border: 0; appearance: none; border-radius: 0; outline: 0; }
a { color: inherit; text-decoration: none; }
svg { display: block; flex: none; }
.defs { position: absolute; width: 0; height: 0; }

/* icon paint */
.d { fill: #434a56; } .b { fill: #2f6af0; } .g { fill: #a9b0bb; } .w { fill: #fff; } .r { fill: #e02a2a; } .o { fill: #f5a623; } .k { fill: #111; } .c { fill: currentColor; }
.ds, .ds2, .ds3, .bs, .gs, .ws, .rs, .rs2, .os, .os2, .ks, .cs { fill: none; stroke-width: 1; }
.ds, .ds2, .ds3 { stroke: #434a56; } .ds2, .os2, .rs2, .cs { stroke-width: 2; } .ds3 { stroke-width: 3; }
.bs { stroke: #2f6af0; } .gs { stroke: #858c98; } .ws { stroke: #fff; }
.rs, .rs2 { stroke: #e02a2a; }
.os, .os2 { stroke: #f0a030; }
.ks { stroke: #222; } .cs { stroke: currentColor; }
.m { fill: #cfe6f4; stroke: #5c7a94; stroke-width: 1; }
.c-o { color: #f0a030; } .c-g { color: #1d9a35; } .c-b { color: #2f6af0; } .c-d { color: #434a56; } .c-y { color: #f4e03a; } .c-w { color: #f4f7ff; } .c-br { color: #d08428; } .c-m { color: #d83ad8; } .c-r { color: #d63030; }

.arr { display: inline-block; border: 1px solid transparent; border-top: 2px solid #4f6c9c; border-bottom: 0; width: 3px; height: 2px; vertical-align: middle; }

.app { position: relative; height: 100%; display: flex; flex-direction: column; }

.titlebar { height: 12px; flex: none; background: #fff; display: flex; align-items: center; padding-left: 22px; }
.quick { display: flex; align-items: center; height: 10px; border-right: 1px solid #a8b4c8; border-bottom: 1px solid #cdd5e2; border-radius: 0 6px 6px 0; padding: 0 4px 0 3px; background: #f1f4f9; width: 179px; }
.quick button { width: 11px; display: flex; justify-content: center; align-items: center; }
.quick .more { width: 16px; gap: 1px; }
.quick svg { width: 8px; height: 8px; }
.quick .pick { flex: 1; height: 9px; background: #fff; color: #111; margin-left: 1px; }
.qmore { width: 4px; height: 4px; margin-left: 3px; border-top: 1px solid #234; border-bottom: 2px solid #234; }
.titlebar h1 { flex: 1; padding-right: 8px; text-align: center; font-weight: 400; font-size: 6px; color: #222; }
.wintools { display: flex; align-items: center; padding-right: 4px; gap: 15px; }
.wintools svg { width: 7px; height: 7px; }
.wintools .user { margin-right: 41px; }
.wintools .user svg { width: 12px; height: 12px; }
.logo { position: absolute; left: 1px; top: 0; z-index: 3; }
.logo svg { width: 20px; height: 20px; }

.pick { position: relative; display: flex; align-items: center; }
.pick select { flex: 1; min-width: 0; height: 9px; line-height: 9px; color: #111; }
.pick::after { content: ""; border: 1px solid transparent; border-top: 2px solid #4f6c9c; border-bottom: 0; margin-right: 2px; }

.tabs { height: 11px; flex: none; display: flex; gap: 1px; padding-left: 24px; background: #bfdbff; }
.tabs a { padding: 1px 6px; height: 11px; }
.tabs .on { background: #e9f2fc; border: 1px solid #94b6e0; border-bottom: 0; border-radius: 2px 2px 0 0; padding: 0 5px; }
.docwin { margin-left: auto; display: flex; align-items: center; gap: 1px; }
.docwin svg { width: 8px; height: 8px; }
.look .arr { margin-left: 1px; }

.ribbon { height: 46px; flex: none; display: flex; gap: 2px; padding: 1px 2px; background: linear-gradient(#dce9f8, #c3dbf3 40%, #d3e6f9); border-top: 1px solid #9dbde6; border-bottom: 1px solid #8db2df; }
.panel { display: flex; flex-direction: column; border: 1px solid #a6c3e3; border-radius: 2px; background: linear-gradient(#deebf8, #cbddf0 40%, #c6daef 60%, #d6e7f7); overflow: hidden; }
.panel h2 { height: 8px; line-height: 8px; font-size: 7px; font-weight: 400; text-align: center; background: #bed6f2; color: #4169a8; }
.panel h2 .arr { margin-left: 5px; }
.body { flex: 1; display: flex; }
.p-draw { width: 111px; } .p-mod { width: 120px; } .p-ann { width: 56px; } .p-lay { width: 138px; } .p-blk { width: 59px; } .p-prop { width: 122px; } .p-grp { width: 39px; } .p-util { width: 55px; } .p-clip { width: 37px; }
.big { width: 22px; display: flex; flex-direction: column; align-items: center; padding-top: 2px; line-height: 9px; white-space: nowrap; }
.big svg { width: 15px; height: 15px; margin-bottom: 1px; }
.big .arr { margin-top: 1px; }
.p-draw .body { padding-left: 1px; }
.big.two { display: block; text-align: center; line-height: 8px; width: 23px; }
.big.two svg { margin: 0 auto 1px; }
.stack { display: grid; grid-template-rows: repeat(3, 11px); align-content: start; }
.sm { display: flex; align-items: center; gap: 1px; }
.sm svg { width: 8px; height: 8px; }
.sm .arr { margin-left: 4px; }
.p-draw .stack { padding-left: 2px; }
.p-mod .body { padding-left: 2px; }
.p-mod .stack { width: 19px; }
.p-mod .stack.wide { width: 27px; }
.p-ann .sm .arr { margin-left: 2px; }
.p-lay .big.two, .p-prop .big.two { margin-right: 1px; }
.laybox { flex: 1; padding-right: 2px; }
.laygrid { display: grid; grid-template-columns: repeat(7, 12px); grid-template-rows: repeat(2, 11px); }
.laygrid button { display: flex; align-items: center; justify-content: center; }
.laygrid svg { width: 9px; height: 9px; }
.laycombo { background: #e9f2fd; border: 1px solid #b4cdea; height: 11px; gap: 2px; padding-left: 1px; }
.laycombo svg { width: 6px; height: 6px; }
.p-blk .big { width: 23px; }
.p-blk .stack { padding: 0 1px; }
.props { flex: 1; display: grid; grid-template-rows: repeat(3, 11px); align-content: start; }
.prop { display: flex; align-items: center; gap: 2px; }
.prop > svg { width: 8px; height: 8px; }
.prop .pick { flex: 1; height: 10px; background: #e9f2fd; border: 1px solid #b4cdea; font-size: 6px; }
.prop .pick svg { width: 8px; height: 8px; margin-right: 1px; }
.lined::before { content: ""; width: 40px; border-top: 1px solid #333; margin: 0 3px 0 0; }
.p-grp .big { width: 25px; }
.p-util .big { width: 24px; }
.p-util .stack { padding-right: 3px; }
.p-util .stack + .stack { padding: 0; }
.p-clip .big { width: 21px; }
.p-clip .stack { padding-left: 2px; }

.work { flex: 1; min-height: 0; display: flex; border-top: 1px solid #dcebfb; }
.side { width: 57px; flex: none; display: flex; flex-direction: column; background: #fff; border-left: 3px solid #a9cdf6; border-right: 3px solid #a9cdf6; }
.sidehead { height: 12px; flex: none; background: linear-gradient(90deg, #b2d0f5, #c9dff8); color: #2f62b4; line-height: 12px; padding-left: 7px; }
.cats { display: grid; grid-template-rows: repeat(13, 1fr); height: 125px; margin: 0 1px; font: 6px/8px "Noto Sans CJK SC", sans-serif; color: #111; }
.cats button { display: flex; align-items: center; justify-content: space-between; padding: 0 3px 0 9px; background: #dceafb; border-bottom: 1px solid #b7cdea; min-height: 0; }
.side span { width: 24px; display: flex; white-space: nowrap; }
.side b { flex: 1; }
.mods { margin: auto 1px 0; display: grid; grid-template-rows: repeat(7, 12px); gap: 1px; font: 6px/8px "Noto Sans CJK SC", sans-serif; font-weight: 500; color: #101a30; }
.mods button { display: flex; align-items: center; gap: 2px; padding-left: 2px; background: linear-gradient(#d8e8fc, #a9cbf8); }
.mods svg { width: 12px; height: 10px; }
.mods .on { background: linear-gradient(#ffd08a, #fba32c); }

.doc { flex: 1; min-width: 0; display: flex; flex-direction: column; }
.doctabs { height: 10px; flex: none; display: flex; align-items: flex-end; background: #bfdbfb; }
.doctab { display: flex; justify-content: space-between; width: 51px; height: 10px; padding: 0 4px 0 12px; background: linear-gradient(#ffedb8, #ffc65a); clip-path: polygon(9px 0, 100% 0, 100% 100%, 0 100%); font: 6px/9px "Liberation Mono", monospace; font-weight: 700; color: #3a2a10; }
.doctab i { font-style: normal; font-weight: 400; color: #c8b48c; }
.canvas { flex: 1; min-height: 0; position: relative; background: #212830; border-top: 1px solid #45505e; border-left: 1px solid #45505e; overflow: hidden; }
.bar { position: absolute; display: flex; align-items: center; height: 12px; background: linear-gradient(#e6f0fe, #c5dbfa); border-left: 3px solid #8fb8f4; border-right: 5px solid #8fbcf8; border-radius: 1px; }
.bar button { flex: 1; display: flex; justify-content: center; }
.bar svg { width: 9px; height: 9px; }
.bar hr { flex: none; width: 1px; height: 9px; border: 0; background: #8fa6cc; margin: 0 1px 0 2px; }
.bar1 { left: 36px; top: 4px; width: 407px; }
.bar2 { left: 42px; top: 19px; width: 199px; padding-left: 2px; }
.cross { position: absolute; left: 244px; top: 2px; width: 40px; height: 22px; }
.cross path { fill: none; stroke: #8b9199; }
.viewcube { position: absolute; right: 0; top: 11px; width: 60px; height: 60px; }
.viewcube text { font: 9px "Noto Sans CJK SC", sans-serif; fill: #e8e8e8; text-anchor: middle; }
.viewcube .top { font-size: 11px; fill: #8a8c8b; }
.axes { position: absolute; left: 5px; bottom: 7px; width: 50px; height: 52px; }
.axes path { fill: none; stroke: #b4b8bd; }

.sheets { height: 10px; flex: none; display: flex; background: #cfe0f3; padding-left: 25px; border-top: 1px solid #e9f1fa; color: #222; font-size: 6px; }
.sheets a { padding: 0 10px 0 3px; line-height: 9px; background: linear-gradient(to bottom right, transparent 47%, #8fa4bc 48%, #8fa4bc 55%, transparent 56%) right / 8px 100% no-repeat; transform: none; }
.sheets a:not(.on) { background-image: linear-gradient(to bottom right, transparent 44%, #8fa4bc 45%, #8fa4bc 55%, transparent 56%); }
.sheets .on { padding: 0 6px; background: #161b20; color: #fff; font-weight: 700; clip-path: polygon(0 0, 100% 0, calc(100% - 5px) 100%, 5px 100%); }
.cmd { height: 26px; flex: none; display: flex; background: #d9e4f1; border-top: 2px solid #b9cfe8; border-bottom: 1px solid #b9cfe8; color: #111; }
.cmdgrip { width: 10px; display: flex; flex-direction: column; justify-content: space-around; align-items: center; }
.cmdgrip svg { width: 7px; height: 7px; }
.cmdlines { flex: 1; background: #fff; padding-left: 2px; font: 7px/11px "Liberation Mono", "Noto Sans CJK SC", monospace; border-left: 1px solid #a0afc4; }
.cmdlines label { display: flex; border-top: 1px solid #b8c2d0; }
.cmdlines input { flex: 1; height: 11px; padding-left: 2px; }

.status { height: 10px; flex: none; display: flex; align-items: center; background: linear-gradient(#bdd8f8, #98bdee); border-top: 1px solid #7fa5da; font: 6px/9px "Liberation Sans", "Noto Sans CJK SC", sans-serif; color: #1f4a94; }
.coords { width: 236px; padding-left: 2px; display: flex; }
.coords .arr { margin: 0 3px; }
.xyz { margin-left: 7px; }
.modes { display: flex; align-items: center; height: 9px; }
.modes button { width: 11px; height: 9px; display: flex; align-items: center; justify-content: center; }
.modes svg { width: 7px; height: 7px; }
.modes .on { background: #fbe29a; border: 1px solid #e8c66a; }
.modes .ratio { width: 23px; gap: 3px; }
.modes.right { margin-left: auto; margin-right: 7px; }
.modes.end { background: linear-gradient(#9fc0ee, #7ea8e2); padding-left: 3px; }
.modes.end span { padding: 0 2px; }

.balloon { position: absolute; right: 16px; bottom: 13px; width: 100px; height: 49px; background: #ffffe1; border: 1px solid #222; border-radius: 6px; padding: 6px 3px 0 8px; color: #111; font-size: 6px; }
.tail { position: absolute; right: 15px; bottom: -10px; width: 10px; height: 11px; }
.bhead { display: flex; align-items: center; height: 11px; }
.bhead > svg { width: 8px; height: 8px; margin-right: 8px; }
.bhead strong { flex: 1; white-space: nowrap; }
.bhead button { border: 1px solid #333; background: #fff; width: 9px; height: 9px; display: flex; align-items: center; justify-content: center; }
.bhead button svg { width: 6px; height: 6px; }
.balloon p { margin-top: 2px; white-space: nowrap; }
.balloon a { display: inline-block; margin-top: 4px; color: #1414e0; text-decoration: underline; }
```
